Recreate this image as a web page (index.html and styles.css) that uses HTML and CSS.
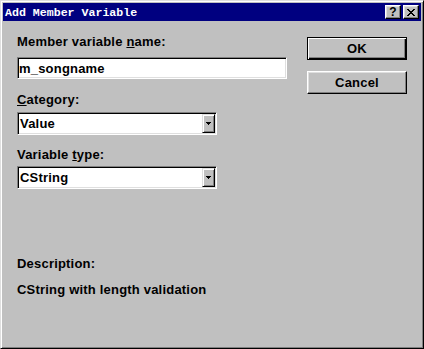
FILE: index.html
```html
<!DOCTYPE html>
<html lang="en">
  <head>
    <meta charset="UTF-8" />
    <meta name="viewport" content="width=device-width, initial-scale=1.0" />
    <title>Add Member Variable</title>
    <link rel="stylesheet" href="styles.css">
  </head>

  <body>
    <div class="window">
      <div class="titlebar">
        <span class="title">Add Member Variable</span>
        <div class="caption-buttons">
          <span class="cap-btn help">?</span>
          <span class="cap-btn close">
            <svg width="8" height="7" viewBox="0 0 8 7" shape-rendering="crispEdges">
              <rect x="0" y="0" width="2" height="1" />
              <rect x="6" y="0" width="2" height="1" />
              <rect x="1" y="1" width="2" height="1" />
              <rect x="5" y="1" width="2" height="1" />
              <rect x="2" y="2" width="4" height="1" />
              <rect x="3" y="3" width="2" height="1" />
              <rect x="2" y="4" width="4" height="1" />
              <rect x="1" y="5" width="2" height="1" />
              <rect x="5" y="5" width="2" height="1" />
              <rect x="0" y="6" width="2" height="1" />
              <rect x="6" y="6" width="2" height="1" />
            </svg>
          </span>
        </div>
      </div>

      <div class="client">
        <div class="fields">
          <div class="label label-name">Member variable <u>n</u>ame:</div>
          <div class="edit">m_songname</div>

          <div class="label label-category"><u>C</u>ategory:</div>
          <div class="combo combo-category">
            <span class="combo-text">Value</span>
            <span class="combo-btn">
              <svg width="5" height="3" viewBox="0 0 5 3" shape-rendering="crispEdges">
                <rect x="0" y="0" width="5" height="1" />
                <rect x="1" y="1" width="3" height="1" />
                <rect x="2" y="2" width="1" height="1" />
              </svg>
            </span>
          </div>

          <div class="label label-type">Variable <u>t</u>ype:</div>
          <div class="combo combo-type">
            <span class="combo-text">CString</span>
            <span class="combo-btn">
              <svg width="5" height="3" viewBox="0 0 5 3" shape-rendering="crispEdges">
                <rect x="0" y="0" width="5" height="1" />
                <rect x="1" y="1" width="3" height="1" />
                <rect x="2" y="2" width="1" height="1" />
              </svg>
            </span>
          </div>

          <div class="label desc-title">Description:</div>
          <div class="label desc-text">CString with length validation</div>
        </div>

        <div class="buttons">
          <button class="btn btn-default">OK</button>
          <button class="btn">Cancel</button>
        </div>
      </div>
    </div>
  </body>
</html>
```

FILE: styles.css
```css
* {
  box-sizing: border-box;
}

body {
  margin: 0;
  padding: 0;
  font-family: "Liberation Sans", Arial, sans-serif;
  background-color: #c0c0c0;
}

.window {
  width: 424px;
  height: 349px;
  padding: 2px;
  display: flex;
  flex-direction: column;
  background-color: #c0c0c0;
  border: 1px solid;
  border-color: #dfdfdf #000 #000 #dfdfdf;
  box-shadow: inset 1px 1px #fff, inset -1px -1px #808080;
}

.titlebar {
  height: 18px;
  padding: 0 2px 0 2px;
  display: flex;
  align-items: flex-start;
  background-color: #000080;
  color: #fff;
}

.title {
  padding-top: 2px;
  font-family: "Liberation Mono", monospace;
  font-weight: bold;
  font-size: 11.6px;
  line-height: 16px;
  white-space: nowrap;
}

.caption-buttons {
  margin-left: auto;
  margin-top: 2px;
  display: flex;
  gap: 2px;
}

.cap-btn {
  width: 16px;
  height: 14px;
  display: flex;
  align-items: center;
  justify-content: center;
  background-color: #c0c0c0;
  color: #000;
  border: 1px solid;
  border-color: #fff #000 #000 #fff;
  box-shadow: inset -1px -1px #808080, inset 1px 1px #dfdfdf;
}

.help {
  font-weight: bold;
  font-size: 12px;
  line-height: 12px;
}

.close svg {
  fill: #000;
}

.client {
  flex: 1;
  display: flex;
  padding: 14px 0 0 14px;
}

.fields {
  width: 270px;
  display: flex;
  flex-direction: column;
}

.label {
  font-weight: bold;
  font-size: 13px;
  line-height: 14px;
  letter-spacing: 0.2px;
  white-space: nowrap;
  color: #000;
}

.label u {
  text-underline-offset: 1px;
}

.edit {
  margin-top: 8px;
  height: 22px;
  padding: 0 1px;
  display: flex;
  align-items: center;
  background-color: #fff;
  font-weight: bold;
  font-size: 13px;
  letter-spacing: 0.2px;
  border: 1px solid;
  border-color: #808080 #fff #fff #808080;
  box-shadow: inset 1px 1px #000, inset -1px -1px #dfdfdf;
}

.label-category {
  margin-top: 14px;
}

.label-type {
  margin-top: 13px;
}

.combo {
  width: 200px;
  height: 23px;
  padding: 1px;
  display: flex;
  background-color: #fff;
  border: 1px solid;
  border-color: #808080 #fff #fff #808080;
  box-shadow: inset 1px 1px #000, inset -1px -1px #dfdfdf;
}

.combo-category {
  margin-top: 5px;
}

.combo-type {
  margin-top: 4px;
}

.combo-text {
  flex: 1;
  padding-left: 1px;
  display: flex;
  align-items: center;
  font-weight: bold;
  font-size: 13px;
  letter-spacing: 0.2px;
}

.combo-btn {
  width: 13px;
  display: flex;
  align-items: center;
  justify-content: center;
  background-color: #c0c0c0;
  border: 1px solid;
  border-color: #dfdfdf #000 #000 #dfdfdf;
  box-shadow: inset 1px 1px #fff, inset -1px -1px #808080;
}

.combo-btn svg {
  fill: #000;
}

.desc-title {
  margin-top: 68px;
}

.desc-text {
  margin-top: 12px;
}

.buttons {
  margin-left: 20px;
  padding-top: 2px;
  width: 100px;
  display: flex;
  flex-direction: column;
  gap: 11px;
}

.btn {
  height: 23px;
  padding: 0;
  font-family: inherit;
  font-weight: bold;
  font-size: 13px;
  letter-spacing: 0.2px;
  color: #000;
  background-color: #c0c0c0;
  border: 1px solid;
  border-color: #fff #000 #000 #fff;
  box-shadow: inset -1px -1px #808080, inset 1px 1px #dfdfdf;
  cursor: default;
}

.btn-default {
  border-color: #000;
  box-shadow: inset 1px 1px #fff, inset -1px -1px #000, inset -2px -2px #808080;
}
```
